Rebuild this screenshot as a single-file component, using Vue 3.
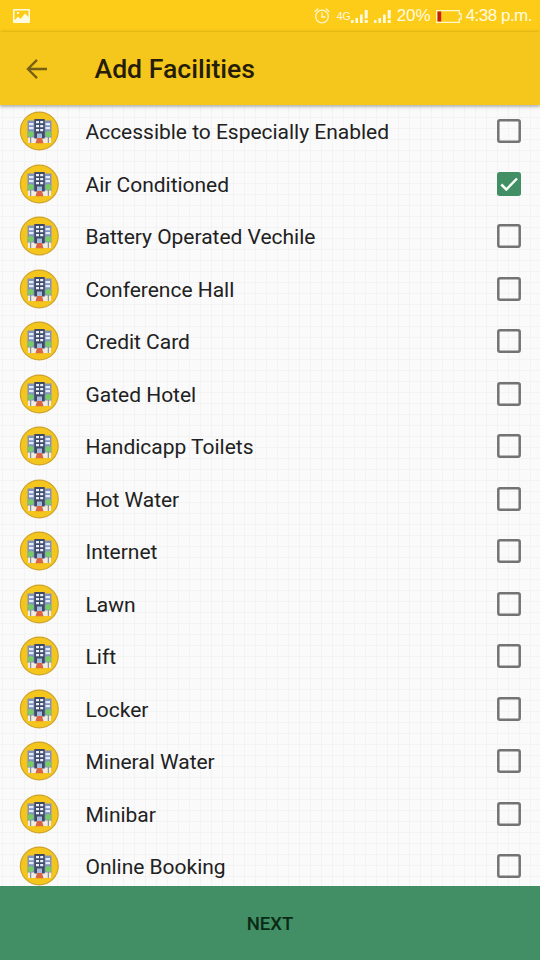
<script setup>
import { ref } from 'vue'

const facilities = ref([
  'Accessible to Especially Enabled',
  'Air Conditioned',
  'Battery Operated Vechile',
  'Conference Hall',
  'Credit Card',
  'Gated Hotel',
  'Handicapp Toilets',
  'Hot Water',
  'Internet',
  'Lawn',
  'Lift',
  'Locker',
  'Mineral Water',
  'Minibar',
  'Online Booking',
].map((name) => ({ name, checked: name === 'Air Conditioned' })))
</script>

<template>
  <div class="screen">
    <div class="status">
      <svg class="photo" width="17" height="14" viewBox="0 0 17 14">
        <path fill="#fffbe0" fill-rule="evenodd" d="M1 0h15a1 1 0 0 1 1 1v12a1 1 0 0 1-1 1H1a1 1 0 0 1-1-1V1a1 1 0 0 1 1-1zM1.5 1.5v10l3.500-4 2.500 2.500L12 4.500l3.500 3.500V1.500zM4 3h2v2H4z" />
      </svg>
      <div class="indicators">
        <svg class="alarm" width="16" height="16" viewBox="0 0 16 16" fill="none" stroke="#fff6cc" stroke-width="1.300" stroke-linecap="round">
          <circle cx="8" cy="8.500" r="6.300" />
          <path d="M8 5v4h3M1 3.500 3.800 1M15 3.500 12.200 1" />
        </svg>
        <span class="network">4G</span>
        <svg class="signal" width="18" height="13" viewBox="0 0 18 13" fill="#fffbe0">
          <path d="M0 10h2.500v3H0zM4.500 8H7v5H4.500zM9 4.500h2.700V13H9zM13.700 0h3v8.500h-3zM13.700 10h3v3h-3z" />
        </svg>
        <svg class="signal second" width="18" height="13" viewBox="0 0 18 13" fill="#fffbe0">
          <path d="M0 10h2.500v3H0zM4.500 8H7v5H4.500zM9 4.500h2.700V13H9zM13.700 0h3v8.500h-3zM13.700 10h3v3h-3z" />
        </svg>
        <span class="percent">20%</span>
        <svg class="battery" width="26" height="13" viewBox="0 0 26 13">
          <path fill="none" stroke="#fff6cc" stroke-width="1.300" d="M.700.700h22.600v3.300h1.800v5h-1.800v3.300H.700z" />
          <path fill="#c62008" d="M1.500 1.500h3.700v10H1.500z" />
        </svg>
        <span class="time">4:38 p.m.</span>
      </div>
    </div>
    <header class="bar">
      <svg class="back" width="22" height="20" viewBox="0 0 22 20" fill="none" stroke="#766011" stroke-width="2.300">
        <path d="M21 10H2M11 .900 1.900 10l9.100 9.100" />
      </svg>
      <h1>Add Facilities</h1>
    </header>
    <main class="list">
      <label v-for="item in facilities" :key="item.name" class="row">
        <svg class="hotel" width="40" height="40" viewBox="0 0 40 40">
          <circle cx="20.300" cy="20" r="18.900" fill="#f4c51d" stroke="#cda32c" stroke-width="1.200" />
          <path fill="#8192bb" d="M8.500 9.500H16V27H8.500zM25 9.500h7.500V27H25z" />
          <path fill="#e3ebf8" d="M10 12h4.500v2.300H10zM10 16h4.500v2.300H10zM26.500 12H31v2.300h-4.500zM26.500 16H31v2.300h-4.500z" />
          <path fill="#f0ebe3" d="M9 26.500h23v5.500H9z" />
          <path fill="#3f4a69" d="M15.300 8h10.400v19.500H15.300z" />
          <path fill="#edf2fa" d="M17 10h3v2.300h-3zM21.200 10h3v2.300h-3zM17 14h3v2.300h-3zM21.200 14h3v2.300h-3zM17 18h3v2.300h-3zM21.200 18h3v2.300h-3z" />
          <path fill="#a7bddd" d="M18 22.500h5V27h-5z" />
          <path fill="#d96542" d="M18 27h5l1.500 5.300h-8z" />
          <path stroke="#777b85" stroke-width="1" d="M11.700 25v7M29.300 25v7" />
          <circle cx="11.700" cy="23" r="3.100" fill="#78c968" />
          <circle cx="29.300" cy="23" r="3.100" fill="#78c968" />
        </svg>
        <span class="name">{{ item.name }}</span>
        <input v-model="item.checked" type="checkbox" />
        <svg class="check" width="24" height="24" viewBox="0 0 24 24">
          <template v-if="item.checked">
            <rect width="24" height="24" rx="2.700" fill="#428f65" />
            <path d="m4.300 12.500 5 5L20 6.500" fill="none" stroke="#f8fff9" stroke-width="2.500" />
          </template>
          <rect v-else x="1.300" y="1.300" width="21.400" height="21.400" rx="1.600" fill="none" stroke="#737373" stroke-width="2.500" />
        </svg>
      </label>
    </main>
    <button class="next">NEXT</button>
  </div>
</template>

<style>
body {
  margin: 0;
}
</style>

<style scoped>
.screen {
  display: flex;
  flex-direction: column;
  width: 540px;
  height: 960px;
  overflow: hidden;
  font-family: Roboto, sans-serif;
  color: #212121;
  background: #fafafa;
}
.status {
  display: flex;
  flex: none;
  box-sizing: border-box;
  align-items: center;
  justify-content: space-between;
  height: 32px;
  padding: 0 8px 0 13px;
  background: #fdcc18;
}
.indicators {
  display: flex;
  align-items: center;
  color: #fffbe0;
  font-family: "Liberation Sans", sans-serif;
  font-size: 17px;
  white-space: nowrap;
}
.alarm {
  margin-right: 7px;
}
.network {
  width: 14px;
  font-size: 10.500px;
}
.signal.second {
  margin-left: 5px;
}
.percent {
  width: 35px;
  margin-left: 5px;
}
.battery {
  margin: 0 4px 0 4px;
}
.time {
  letter-spacing: -0.500px;
}
.bar {
  z-index: 1;
  display: flex;
  flex: none;
  align-items: center;
  height: 73px;
  padding-left: 26px;
  background: #f5c61c;
  box-shadow: 0 1px 4px rgba(0, 0, 0, 0.4);
}
h1 {
  margin: 0 0 0 46.500px;
  color: #251d08;
  font-size: 26.600px;
  font-weight: 500;
  line-height: 32px;
}
.list {
  flex: 1;
  min-height: 0;
  overflow: hidden;
  background:
    linear-gradient(#f3f3f3 1px, transparent 1px) 0 1px / 100% 11px,
    linear-gradient(90deg, #f3f3f3 1px, transparent 1px) 2px 0 / 11px 100%,
    #fafafa;
}
.row {
  display: flex;
  box-sizing: border-box;
  align-items: center;
  height: 52.500px;
  padding: 0.400px 19px 0;
}
.name {
  flex: 1;
  margin: 1.500px 0 0 26.500px;
  font-size: 21px;
  letter-spacing: -0.020px;
  line-height: 28px;
}
.row input {
  width: 0;
  height: 0;
  margin: 0;
  opacity: 0;
}
.next {
  flex: none;
  height: 73.600px;
  padding: 1px 0 0;
  border: 0;
  color: #092a16;
  background: #428f65;
  font: 500 18.500px Roboto, sans-serif;
}
</style>
